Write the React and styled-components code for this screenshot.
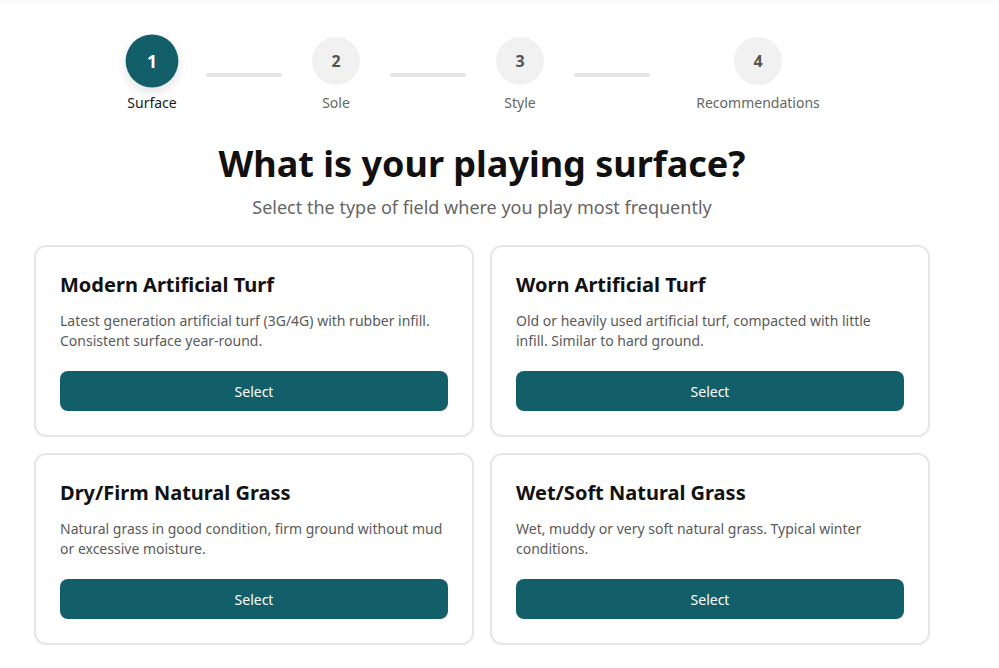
import React from 'react';
import styled, { createGlobalStyle } from 'styled-components';

const GlobalStyle = createGlobalStyle`
  body {
    margin: 0;
    background: #ffffff;
    font-family: 'Noto Sans', 'Open Sans', sans-serif;
    color: #111111;
  }
  * {
    box-sizing: border-box;
  }
`;

const TopShade = styled.div`
  height: 4px;
  background: linear-gradient(#f7f7f5, #ffffff);
`;

const Page = styled.main`
  width: 896px;
  margin-left: 34px;
  padding-top: 33px;
`;

const Stepper = styled.ol`
  display: flex;
  align-items: center;
  list-style: none;
  margin: 0;
  padding: 0 0 0 94px;
`;

const Step = styled.li`
  display: flex;
  flex-direction: column;
  align-items: center;
  width: 48px;
  gap: 8px;
`;

const Circle = styled.div`
  width: 48px;
  height: 48px;
  border-radius: 50%;
  display: flex;
  align-items: center;
  justify-content: center;
  font-size: 16px;
  font-weight: 700;
  background: ${(props) => (props.$active ? '#135f69' : '#f1f1f1')};
  color: ${(props) => (props.$active ? '#ffffff' : '#555555')};
  transform: ${(props) => (props.$active ? 'scale(1.1)' : 'none')};
  box-shadow: ${(props) => (props.$active ? '0 4px 10px rgba(0, 0, 0, 0.12)' : 'none')};
`;

const StepLabel = styled.span`
  font-size: 14px;
  line-height: 20px;
  white-space: nowrap;
  color: ${(props) => (props.$active ? '#1a1a1a' : '#666666')};
`;

const Connector = styled.div`
  width: 76px;
  height: 4px;
  border-radius: 2px;
  background: #e5e5e5;
  margin: 0 ${(props) => props.$after || 30}px 0 30px;
`;

const Heading = styled.h1`
  margin: 29px 0 0;
  font-size: 36px;
  line-height: 1.2;
  font-weight: 700;
  text-align: center;
  color: #111111;
`;

const Subtitle = styled.p`
  margin: 9px 0 0;
  font-size: 18px;
  line-height: 27px;
  text-align: center;
  color: #666666;
`;

const Grid = styled.div`
  display: grid;
  grid-template-columns: 1fr 1fr;
  gap: 16px;
  margin-top: 24px;
`;

const Card = styled.div`
  border: 2px solid #e6e6e6;
  border-radius: 12px;
  padding: 26px 24px 24px;
  background: #ffffff;
`;

const CardTitle = styled.h2`
  margin: 0;
  font-size: 20px;
  line-height: 24px;
  font-weight: 700;
  color: #111111;
`;

const CardText = styled.p`
  margin: 14px 0 0;
  font-size: 14px;
  line-height: 20px;
  color: #5a5a5a;
  min-height: 40px;
`;

const SelectButton = styled.button`
  display: block;
  width: 100%;
  height: 40px;
  margin-top: 20px;
  border: none;
  border-radius: 8px;
  background: #135f69;
  color: #ffffff;
  font-family: inherit;
  font-size: 14px;
  font-weight: 400;
  cursor: pointer;
`;

const steps = [
  { id: 1, label: 'Surface' },
  { id: 2, label: 'Sole' },
  { id: 3, label: 'Style' },
  { id: 4, label: 'Recommendations' },
];

const surfaces = [
  {
    title: 'Modern Artificial Turf',
    text: 'Latest generation artificial turf (3G/4G) with rubber infill. Consistent surface year-round.',
  },
  {
    title: 'Worn Artificial Turf',
    text: 'Old or heavily used artificial turf, compacted with little infill. Similar to hard ground.',
  },
  {
    title: 'Dry/Firm Natural Grass',
    text: 'Natural grass in good condition, firm ground without mud or excessive moisture.',
  },
  {
    title: 'Wet/Soft Natural Grass',
    text: 'Wet, muddy or very soft natural grass. Typical winter conditions.',
  },
];

const App = () => {
  const current = 1;

  return (
    <>
      <GlobalStyle />
      <TopShade />
      <Page>
        <Stepper>
          {steps.map((step, index) => (
            <React.Fragment key={step.id}>
              <Step>
                <Circle $active={step.id === current}>{step.id}</Circle>
                <StepLabel $active={step.id === current}>{step.label}</StepLabel>
              </Step>
              {index < steps.length - 1 && <Connector $after={index === steps.length - 2 ? 84 : 30} />}
            </React.Fragment>
          ))}
        </Stepper>

        <Heading>What is your playing surface?</Heading>
        <Subtitle>Select the type of field where you play most frequently</Subtitle>

        <Grid>
          {surfaces.map((item) => (
            <Card key={item.title}>
              <CardTitle>{item.title}</CardTitle>
              <CardText>{item.text}</CardText>
              <SelectButton type="button">Select</SelectButton>
            </Card>
          ))}
        </Grid>
      </Page>
    </>
  );
};

export default App;
